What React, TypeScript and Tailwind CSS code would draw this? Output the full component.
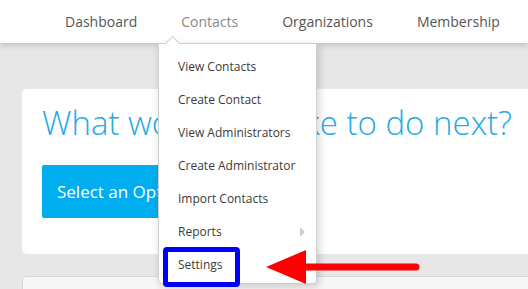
import React from "react";

const menuItems = [
  "View Contacts",
  "Create Contact",
  "View Administrators",
  "Create Administrator",
  "Import Contacts",
  "Reports",
  "Settings",
];

const navItems = ["Dashboard", "Contacts", "Organizations", "Membership"];

function RedArrow() {
  return (
    <svg
      className="absolute left-[262px] top-[247px]"
      width="162"
      height="40"
      viewBox="0 0 162 40"
    >
      <line x1="40" y1="20" x2="154" y2="20" stroke="#ff0000" strokeWidth="7" strokeLinecap="round" />
      <polygon points="4,20 44,3 44,37" fill="#ff0000" />
    </svg>
  );
}

export default function App() {
  return (
    <div
      className="relative w-[528px] h-[289px] overflow-hidden bg-[#e7e7e7]"
      style={{ fontFamily: '"Open Sans", "Liberation Sans", sans-serif' }}
    >
      {/* top nav */}
      <header className="relative z-10 h-[43px] bg-white shadow-[0_2px_6px_rgba(0,0,0,0.18)]">
        <nav className="flex items-center h-full pl-[65px] gap-[44px] text-[14px] text-[#555]">
          {navItems.map((n) => (
            <span key={n} className={n === "Contacts" ? "text-[#8a8a8a]" : ""}>
              {n}
            </span>
          ))}
        </nav>
      </header>

      {/* main card */}
      <div className="mt-[46px] ml-[22px] w-[520px] h-[165px] bg-white rounded-[5px] pt-[14px] pl-[20px]">
        <h1 className="text-[33px] font-light leading-[40px] text-[#25aae6] whitespace-nowrap">
          What would you like to do next?
        </h1>
        <button className="mt-[22px] h-[53px] w-[210px] bg-[#00adef] rounded-[2px] text-left pl-[15px] text-white text-[17px]">
          Select an Option
        </button>
      </div>

      <div className="mt-[22px] ml-[22px] w-[520px] h-[40px] bg-[#f7f7f7] border border-[#d6d6d6] rounded-[4px]" />

      {/* dropdown */}
      <div className="absolute z-20 left-[158px] top-[43px] w-[159px] h-[241px] bg-white border border-[#cfcfcf] rounded-b-[4px] shadow-[2px_3px_8px_rgba(0,0,0,0.18)]">
        <div className="absolute -top-[6px] left-[8px] w-[11px] h-[11px] rotate-45 bg-white border-l border-t border-[#cfcfcf]" />
        <ul className="relative pt-[6px] text-[12px] text-[#3b3b3b]">
          {menuItems.map((m) => (
            <li key={m} className="relative h-[33px] flex items-center pl-[19px]">
              {m === "Settings" && (
                <div className="absolute left-[4px] top-[-1px] w-[77px] h-[40px] border-[5px] border-[#0000ff] rounded-[4px]" />
              )}
              <span className="relative">{m}</span>
              {m === "Reports" && (
                <span className="absolute right-[11px] top-[12px] w-0 h-0 border-y-[5px] border-y-transparent border-l-[5px] border-l-[#cccccc]" />
              )}
            </li>
          ))}
        </ul>
      </div>

      <div className="absolute inset-0 z-30 pointer-events-none">
        <RedArrow />
      </div>
    </div>
  );
}
